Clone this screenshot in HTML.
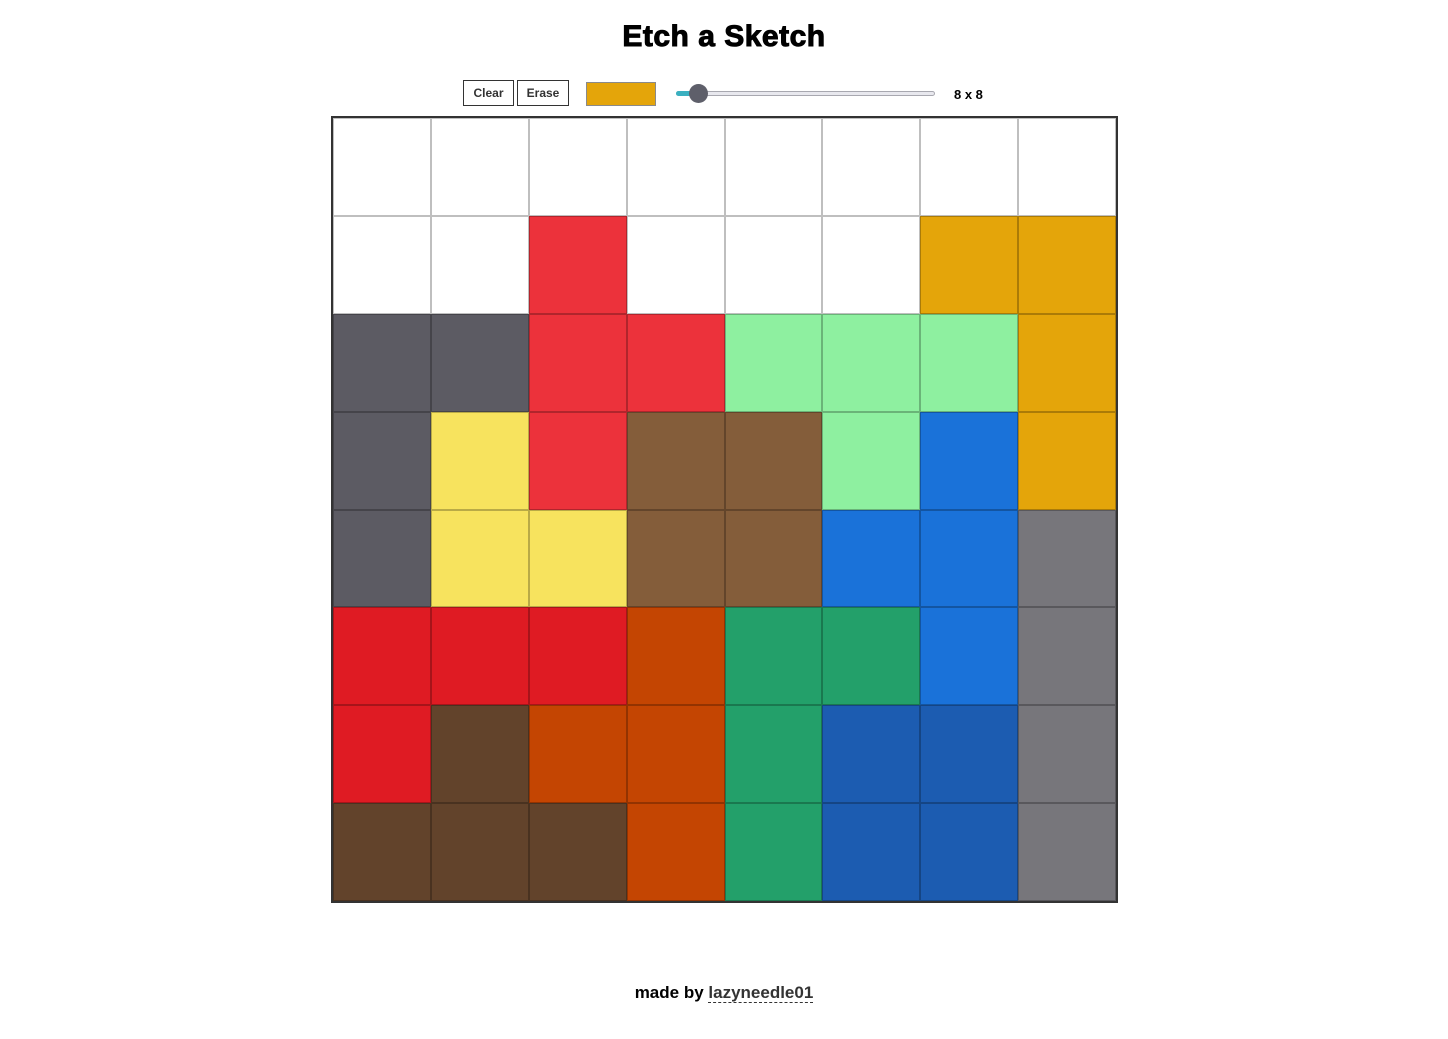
<!DOCTYPE html>
<html><head><meta charset="utf-8"><style>
*{box-sizing:border-box;margin:0;padding:0}
body{width:1448px;height:1039px;background:#fff;font-family:"Liberation Sans",sans-serif;position:relative;overflow:hidden}
h1{position:absolute;top:20px;left:0;width:1448px;text-align:center;font-size:30px;font-weight:900;letter-spacing:0.5px;color:#000;-webkit-text-stroke:1px #000}
.btn{position:absolute;top:80px;height:26px;border:1px solid #333;background:#fff;font-size:12px;font-weight:bold;color:#333;text-align:center;line-height:24px}
.sw{position:absolute;left:586px;top:82px;width:70px;height:24px;background:#e4a50a;border:1px solid #8a8a8a}
.track{position:absolute;left:676px;top:91px;width:259px;height:5px;border-radius:3px;background:#e8e8ee;border:1px solid #a8a8b0}
.fill{position:absolute;left:676px;top:91px;width:22px;height:5px;border-radius:3px;background:#3ab0c0}
.thumb{position:absolute;left:689px;top:84px;width:19px;height:19px;border-radius:50%;background:#5e5f6a}
.lbl{position:absolute;left:954px;top:87px;font-size:13px;font-weight:bold}
#grid{position:absolute;left:331px;top:116px;width:787px;height:787px;border:2px solid #333;display:grid;grid-template-columns:repeat(8,1fr);grid-template-rows:repeat(8,1fr)}
#grid div{border:1px solid rgba(0,0,0,.25)}
.foot{position:absolute;top:983px;left:0;width:1448px;text-align:center;font-size:17px;font-weight:bold}
.foot span{color:#333;border-bottom:1px dashed #333}
</style></head><body>
<h1>Etch a Sketch</h1>
<div class="btn" style="left:463px;width:51px">Clear</div>
<div class="btn" style="left:517px;width:52px">Erase</div>
<div class="sw"></div>
<div class="track"></div><div class="fill"></div><div class="thumb"></div>
<div class="lbl">8 x 8</div>
<div id="grid"></div>
<div class="foot">made by <span>lazyneedle01</span></div>
<script>
var C={W:'#fff',R:'#ec323b',G:'#e4a50a',K:'#5c5b63',L:'#8ef0a0',Y:'#f7e35e',B:'#845d3a',U:'#1a72d9',S:'#77767b',r:'#df1b23',O:'#c44502',T:'#23a06a',D:'#62432b',N:'#1c5cb1'};
var rows=['WWWWWWWW','WWRWWWGG','KKRRLLLG','KYRBBLUG','KYYBBUUS','rrrOTTUS','rDOOTNNS','DDDOTNNS'];
var g=document.getElementById('grid'),h='';
rows.forEach(function(r){for(var i=0;i<8;i++)h+='<div style="background:'+C[r[i]]+'"></div>';});
g.innerHTML=h;
</script>
</body></html>
